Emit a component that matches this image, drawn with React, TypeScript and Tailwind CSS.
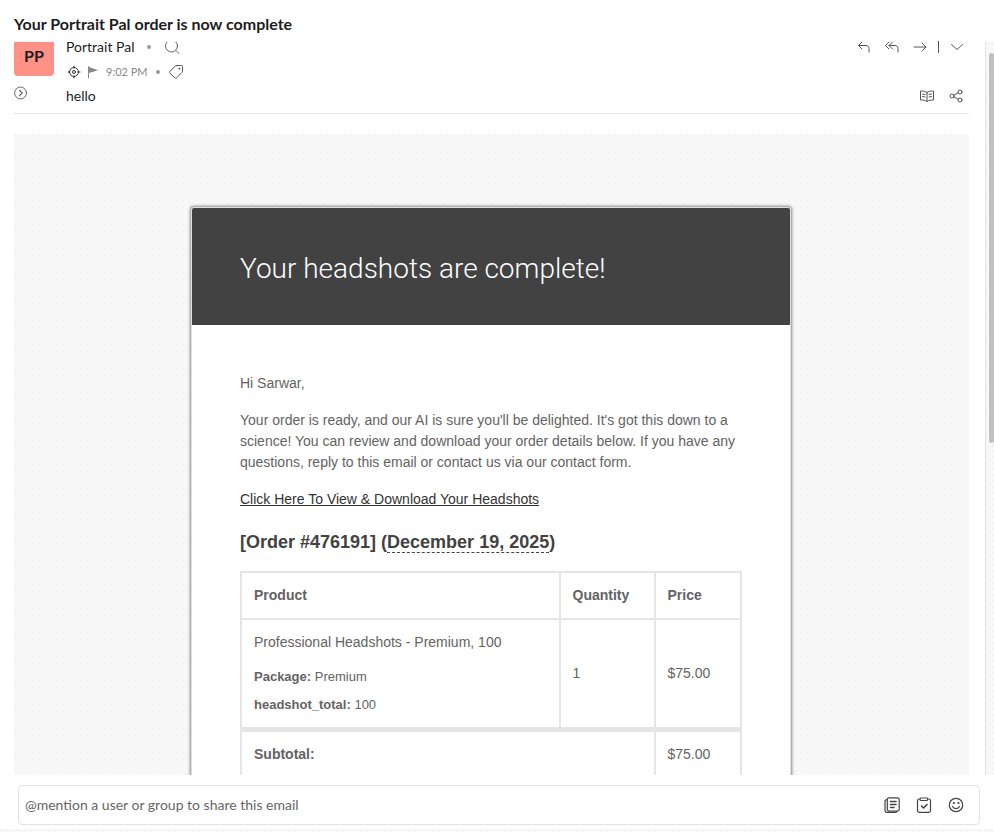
import React from 'react';

const dots =
  'bg-[#f8f8f8] bg-[radial-gradient(circle_at_1px_1px,#f3f3f3_1px,transparent_1px),radial-gradient(circle_at_4px_4px,#f4f4f4_1px,transparent_1px)] bg-[length:6px_6px]';

type IconProps = { children: React.ReactNode; className?: string };

function Icon({ children, className = 'h-4 w-4' }: IconProps) {
  return (
    <svg
      viewBox="0 0 16 16"
      className={`shrink-0 ${className}`}
      fill="none"
      stroke="currentColor"
      strokeWidth="1"
      strokeLinecap="round"
      strokeLinejoin="round"
      aria-hidden="true"
    >
      {children}
    </svg>
  );
}

function Dot() {
  return <span className="h-1 w-1 rounded-full bg-[#999]" />;
}

function MessageHeader() {
  return (
    <div className="flex items-start border-b border-[#e4e4e4] pb-[5px]">
      <div className="w-[52px] shrink-0">
        <div className="flex h-[34px] w-10 items-center justify-center rounded-b bg-[#ff9186] pb-1.5 text-base font-bold text-[#1d1d1d]">
          PP
        </div>
        <button aria-label="Show details" className="mt-2.5 block text-[#555]">
          <Icon className="h-3.5 w-3.5">
            <circle cx="7.5" cy="8" r="6.8" />
            <path d="M6.3 5 9.3 8l-3 3" strokeWidth="1.3" />
          </Icon>
        </button>
      </div>

      <div className="flex-1 text-[#1d1d1d]">
        <div className="mb-2 flex h-2.5 items-center gap-[13px] text-sm">
          <span>Portrait Pal</span>
          <Dot />
          <button aria-label="Search sender" className="flex h-[13px] items-end self-start overflow-hidden text-[#666]">
            <Icon>
              <circle cx="7.5" cy="7" r="6" />
              <path d="m12 11.5 3 3" />
            </Icon>
          </button>
        </div>
        <div className="flex h-6 items-center gap-2 text-[11px] text-[#888]">
          <div className="flex items-center gap-1">
            <button aria-label="Tracking" className="text-[#333]">
              <Icon>
                <circle cx="8" cy="8" r="4.5" />
                <circle cx="8" cy="8" r="1.5" />
                <path d="M8 2v2M8 12v2M2 8h2M12 8h2" />
              </Icon>
            </button>
            <button aria-label="Flag">
              <Icon>
                <path d="M2.5 2.5V14" />
                <path d="M3 3l9 3.2L3 9Z" fill="currentColor" stroke="none" />
              </Icon>
            </button>
            <span>9:02 PM</span>
          </div>
          <Dot />
          <button aria-label="Tag" className="text-[#555]">
            <Icon>
              <path d="M9 1.5h4.500c.6 0 1 .4 1 1V7c0 .5-.2 1-.5 1.300l-5.200 5.400c-.6.6-1.500.6-2.100 0L2 9.300c-.6-.6-.6-1.500 0-2.100L7.400 2c.4-.3 1-.5 1.600-.5Z" />
              <circle cx="11.3" cy="4.7" r=".5" fill="currentColor" />
            </Icon>
          </button>
        </div>
        <div className="flex h-6 items-center text-sm">hello</div>
      </div>

      <div className="flex flex-col items-end text-[#555]">
        <div className="flex h-2.5 items-center gap-3 pr-1">
          <button aria-label="Reply">
            <Icon>
              <path d="M6 3 2.500 6.500 6 10M2.500 6.500H10c2 0 3 1.200 3 3V13" />
            </Icon>
          </button>
          <button aria-label="Reply all">
            <Icon>
              <path d="M5 3 1.500 6.500 5 10M8.500 3 5 6.500 8.500 10M5 6.500h6c2 0 3 1.200 3 3V13" />
            </Icon>
          </button>
          <button aria-label="Forward">
            <Icon>
              <path d="M2 8h12M10 4l4 4-4 4" />
            </Icon>
          </button>
          <span className="-mx-0.5 h-3 w-px bg-[#555]" />
          <button aria-label="More actions">
            <Icon>
              <path d="m2.500 5.500 5.500 5 5.500-5" />
            </Icon>
          </button>
        </div>
        <div className="mt-8 flex h-6 items-center gap-[13px] pr-[5px]">
          <button aria-label="Reader view">
            <Icon>
              <path d="M8 4.500C6 3 4 3 1.500 3v9C4 12 6 12 8 13.500c2-1.500 4-1.500 6.500-1.500V3C12 3 10 3 8 4.500ZM8 4.500v9M3.500 6l2.500.5M3.500 8.500l2.500.5M12.500 6l-2.500.5M12.500 8.500 10 9" />
            </Icon>
          </button>
          <button aria-label="Share">
            <Icon>
              <circle cx="4" cy="8" r="2" />
              <circle cx="12" cy="4" r="2" />
              <circle cx="12" cy="12" r="2" />
              <path d="m5.800 7.100 4.400-2.200M5.800 8.900l4.400 2.200" />
            </Icon>
          </button>
        </div>
      </div>
    </div>
  );
}

function OrderTable() {
  const cell = 'border-2 border-[#e5e5e5] p-3 text-left';
  return (
    <table className="w-full table-fixed border-collapse">
      <colgroup>
        <col className="w-[63.7%]" />
        <col className="w-[19%]" />
        <col className="w-[17.3%]" />
      </colgroup>
      <thead>
        <tr>
          <th scope="col" className={cell}>Product</th>
          <th scope="col" className={cell}>Quantity</th>
          <th scope="col" className={cell}>Price</th>
        </tr>
      </thead>
      <tbody>
        <tr>
          <td className={cell}>
            Professional Headshots - Premium, 100
            <ul className="mt-3.5 space-y-2 text-[13px] leading-5">
              <li><strong>Package:</strong> Premium</li>
              <li><strong>headshot_total:</strong> 100</li>
            </ul>
          </td>
          <td className={cell}>1</td>
          <td className={cell}>$75.00</td>
        </tr>
      </tbody>
      <tfoot>
        <tr>
          <th scope="row" colSpan={2} className="border-2 border-t-[5px] border-[#e5e5e5] p-3 text-left">Subtotal:</th>
          <td className="border-2 border-t-[5px] border-[#e5e5e5] p-3 text-left">$75.00</td>
        </tr>
      </tfoot>
    </table>
  );
}

function EmailBody() {
  return (
    <div className={`mt-5 min-h-0 flex-1 overflow-hidden pt-[73px] pr-[17px] pl-4 ${dots}`}>
      <div className="mx-auto max-w-[600px] overflow-hidden rounded-[3px] border border-[#dedede] bg-white font-['Liberation_Sans',Arial,sans-serif] text-sm leading-[21px] text-[#636363] shadow-[0_0_3px_1px_#888]">
        <div className="bg-[#424242] px-12 pt-[38px] pb-[34px]">
          <h1 className="font-['Roboto',sans-serif] text-[28px] leading-[45px] font-light text-white">
            Your headshots are complete!
          </h1>
        </div>
        <div className="px-12 pt-12 pb-8">
          <p className="mb-4">Hi Sarwar,</p>
          <p className="mb-4">
            Your order is ready, and our AI is sure you'll be delighted. It's got this down to a science! You can
            review and download your order details below. If you have any questions, reply to this email or contact
            us via our contact form.
          </p>
          <p className="mb-5">
            <a href="#headshots" className="text-[#333] underline">Click Here To View &amp; Download Your Headshots</a>
          </p>
          <h2 className="mb-4 text-lg leading-[25px] font-bold text-[#424242]">
            [Order #476191] (<time className="border-b border-dashed border-[#424242]" dateTime="2025-12-19">December 19, 2025</time>)
          </h2>
          <OrderTable />
        </div>
      </div>
    </div>
  );
}

function ShareBar() {
  return (
    <footer className="shrink-0 bg-white pt-2.5">
      <div className="mr-3.5 ml-[18px] flex h-10 items-center rounded border border-[#e2e2e2] pr-[15px] pl-1.5 text-[#444]">
        <input
          type="text"
          aria-label="Share this email"
          placeholder="@mention a user or group to share this email"
          className="min-w-0 flex-1 text-sm outline-none placeholder:text-[#666]"
        />
        <div className="flex items-center gap-4">
          <button aria-label="Templates">
            <Icon>
              <path d="M5 .8h8.500c1 0 1.700.6 1.700 1.700v9.800c0 1-.7 1.700-1.700 1.700H5c-1 0-1.700-.7-1.700-1.700V2.500C3.300 1.400 4 .8 5 .8ZM3.300 2.500C1.800 2.500 1 3.300 1 4.500v8.700c0 1.300.8 2.100 2 2.100h8.500c1 0 1.600-.5 1.900-1.300" strokeWidth="1.2" />
              <path d="M6.500 4.500H12M6.500 7.500H12M6.500 10.500H10" strokeWidth="1.6" />
            </Icon>
          </button>
          <button aria-label="Tasks">
            <Icon>
              <rect x="1.5" y="2" width="13" height="13.3" rx="1.8" strokeWidth="1.2" />
              <path d="M4.500 1h7v2.500h-7Z" fill="white" />
              <path d="m5.500 9 2 2 3.500-3.500" strokeWidth="1.6" />
            </Icon>
          </button>
          <button aria-label="Emoji">
            <Icon>
              <circle cx="8" cy="8" r="6.7" strokeWidth="1.2" />
              <path d="M4.500 9.500c1.300 2.700 5.700 2.700 7 0" strokeWidth="1.2" />
              <circle cx="5.7" cy="6" r=".6" fill="currentColor" />
              <circle cx="10.3" cy="6" r=".6" fill="currentColor" />
            </Icon>
          </button>
        </div>
      </div>
      <div className={`mt-1 h-[3px] ${dots}`} />
    </footer>
  );
}

export default function App() {
  return (
    <div className="flex h-screen flex-col bg-white font-['Lato',sans-serif]">
      <header className="flex h-[42px] shrink-0 items-center px-3.5 pt-1.5">
        <h1 className="text-base font-bold text-[#1d1d1d]">Your Portrait Pal order is now complete</h1>
      </header>

      <div className="flex min-h-0 flex-1">
        <main className="flex min-w-0 flex-1 flex-col pr-4 pl-3.5">
          <MessageHeader />
          <EmailBody />
        </main>
        <div className={`w-[9px] shrink-0 border-l border-[#e2e2e2] pt-[11px] pl-[3px] ${dots}`}>
          <div className="h-[54%] rounded-full bg-[#c1c1c1]" />
        </div>
      </div>

      <ShareBar />
    </div>
  );
}
